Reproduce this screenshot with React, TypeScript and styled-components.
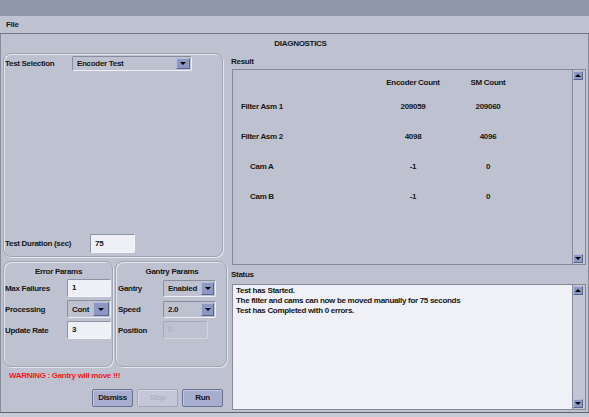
import React from 'react'
import styled, { createGlobalStyle } from 'styled-components'

const GlobalStyle = createGlobalStyle`
  html, body {
    margin: 0;
    padding: 0;
    background: #c7cbd8;
  }
  body {
    font-family: 'Liberation Sans', Arial, sans-serif;
    font-size: 8px;
    font-weight: bold;
    letter-spacing: -0.3px;
    color: #161616;
  }
  * {
    box-sizing: border-box;
  }
`

const Frame = styled.div`
  width: 589px;
  height: 413px;
  display: flex;
  flex-direction: column;
  background: #bec2d0;
  border-bottom: 1px solid #5e6270;
`

const TitleBar = styled.div`
  height: 16px;
  background: #8f96a8;
`

const MenuBar = styled.div`
  height: 18px;
  line-height: 17px;
  padding-left: 6px;
  background: #bfc3d1;
  border-bottom: 1px solid #6f7483;
`

const Content = styled.div`
  flex: 1;
  display: flex;
  flex-direction: column;
  border-left: 1px solid #878c9b;
  border-right: 1px solid #878c9b;
`

const Header = styled.div`
  height: 19px;
  line-height: 19px;
  text-align: center;
  padding-left: 12px;
`

const Panes = styled.div`
  flex: 1;
  display: flex;
`

const LeftPane = styled.div`
  width: 228px;
  padding-left: 2px;
  display: flex;
  flex-direction: column;
`

const Group = styled.div<{ $width: number; $height: number }>`
  width: ${(p) => p.$width}px;
  height: ${(p) => p.$height}px;
  border: 1px solid #a0a5b5;
  border-radius: 8px;
  box-shadow: 1px 1px 0 #e3e6ee, inset 1px 1px 0 #e3e6ee;
  display: flex;
  flex-direction: column;
`

const TestGroup = styled(Group)`
  padding: 2px 0 3px 1px;
`

const Spacer = styled.div`
  flex: 1;
`

const FieldRow = styled.div<{ $height?: number }>`
  display: flex;
  align-items: center;
  height: ${(p) => p.$height ?? 18}px;
`

const Label = styled.div<{ $width: number; $muted?: boolean }>`
  width: ${(p) => p.$width}px;
  flex-shrink: 0;
  color: ${(p) => (p.$muted ? '#161616' : 'inherit')};
`

const Combo = styled.div<{ $width: number; $height: number }>`
  width: ${(p) => p.$width}px;
  height: ${(p) => p.$height}px;
  display: flex;
  align-items: center;
  padding: 1px;
  border: 1px solid;
  border-color: #888d9e #eef0f5 #eef0f5 #888d9e;
  border-radius: 2px;
`

const ComboText = styled.div`
  flex: 1;
  padding-left: 3px;
`

const ArrowButton = styled.div<{ $width: number }>`
  width: ${(p) => p.$width}px;
  align-self: stretch;
  background: #8d97c3;
  border: 1px solid;
  border-color: #b7bedd #5d6587 #5d6587 #b7bedd;
  display: flex;
  align-items: center;
  justify-content: center;
  &::after {
    content: '';
    border-left: 3px solid transparent;
    border-right: 3px solid transparent;
    border-top: 3px solid #000;
  }
`

const Input = styled.div<{ $width: number; $height?: number; $disabled?: boolean }>`
  width: ${(p) => p.$width}px;
  height: ${(p) => p.$height ?? 18}px;
  line-height: ${(p) => (p.$height ?? 18) - 2}px;
  padding-left: 4px;
  border: 1px solid;
  border-radius: 2px;
  border-color: ${(p) =>
    p.$disabled ? '#a6abbb #d3d6e0 #d3d6e0 #a6abbb' : '#8d92a3 #f4f5f9 #f4f5f9 #8d92a3'};
  background: ${(p) => (p.$disabled ? '#bec2d0' : '#eef0f6')};
  color: ${(p) => (p.$disabled ? '#a5a9b7' : 'inherit')};
  font-weight: ${(p) => (p.$disabled ? 'normal' : 'bold')};
`

const ParamsRow = styled.div`
  margin-top: 4px;
  display: flex;
  gap: 2px;
`

const ParamGroup = styled(Group)<{ $pad: number }>`
  padding: 5px 0 0 ${(p) => p.$pad}px;
  gap: 3px;
`

const GroupTitle = styled.div`
  text-align: center;
  line-height: 10px;
  margin-bottom: -1px;
`

const Warning = styled.div`
  margin-top: 4px;
  padding-left: 6px;
  line-height: 10px;
  color: #f01818;
`

const ButtonRow = styled.div`
  margin-top: 8px;
  padding-right: 6px;
  display: flex;
  justify-content: flex-end;
  gap: 4px;
`

const Button = styled.div<{ $disabled?: boolean }>`
  width: 41px;
  height: 18px;
  line-height: 16px;
  text-align: center;
  border: 1px solid ${(p) => (p.$disabled ? '#a2a7b8' : '#6a7190')};
  border-radius: 2px;
  background: ${(p) => (p.$disabled ? '#c3c7d6' : '#a7adcf')};
  color: ${(p) => (p.$disabled ? '#a6aab8' : 'inherit')};
  font-weight: ${(p) => (p.$disabled ? 'normal' : 'bold')};
  box-shadow: inset 1px 1px 0 ${(p) => (p.$disabled ? '#d6d9e3' : '#c3c8e2')};
`

const RightPane = styled.div`
  flex: 1;
  display: flex;
  flex-direction: column;
`

const SectionLabel = styled.div<{ $top: number }>`
  margin-top: ${(p) => p.$top}px;
  padding-left: 2px;
  line-height: 10px;
`

const ScrollBox = styled.div<{ $height: number; $top: number; $light?: boolean }>`
  margin: ${(p) => p.$top}px 2px 0 3px;
  height: ${(p) => p.$height}px;
  display: flex;
  border: 1px solid #858998;
  background: ${(p) => (p.$light ? '#eff1f7' : '#bec2d0')};
`

const TableArea = styled.div`
  flex: 1;
  padding: 8px 0 0 8px;
  display: grid;
  grid-template-columns: 132px 70px 70px;
  grid-template-rows: 24px 30px 30px 30px 10px;
  column-gap: 5px;
  align-content: start;
`

const Cell = styled.div<{ $center?: boolean; $indent?: number }>`
  line-height: 10px;
  text-align: ${(p) => (p.$center ? 'center' : 'left')};
  padding-left: ${(p) => p.$indent ?? 0}px;
`

const StatusText = styled.div`
  flex: 1;
  padding: 1px 0 0 3px;
  line-height: 10px;
`

const Scrollbar = styled.div`
  width: 13px;
  border-left: 1px solid #858998;
  background: #c2c6d4;
  display: flex;
  flex-direction: column;
  justify-content: space-between;
  padding: 1px 2px 1px 0;
`

const ScrollArrow = styled.div<{ $up?: boolean }>`
  height: 9px;
  background: #8d97c3;
  border: 1px solid;
  border-color: #b7bedd #5d6587 #5d6587 #b7bedd;
  display: flex;
  align-items: center;
  justify-content: center;
  &::after {
    content: '';
    border-left: 3px solid transparent;
    border-right: 3px solid transparent;
    ${(p) => (p.$up ? 'border-bottom: 3px solid #000;' : 'border-top: 3px solid #000;')}
  }
`

const rows = [
  { name: 'Filter Asm 1', enc: '209059', sm: '209060', indent: 0 },
  { name: 'Filter Asm 2', enc: '4098', sm: '4096', indent: 0 },
  { name: 'Cam A', enc: '-1', sm: '0', indent: 9 },
  { name: 'Cam B', enc: '-1', sm: '0', indent: 9 },
]

const statusLines = [
  'Test has Started.',
  'The filter and cams can now be moved manually for 75 seconds',
  'Test has Completed with 0 errors.',
]

const App = () => {
  return (
    <>
      <GlobalStyle />
      <Frame>
        <TitleBar />
        <MenuBar>File</MenuBar>
        <Content>
          <Header>DIAGNOSTICS</Header>
          <Panes>
            <LeftPane>
              <TestGroup $width={220} $height={204}>
                <FieldRow $height={15}>
                  <Label $width={67}>Test Selection</Label>
                  <Combo $width={120} $height={15}>
                    <ComboText>Encoder Test</ComboText>
                    <ArrowButton $width={14} />
                  </Combo>
                </FieldRow>
                <Spacer />
                <FieldRow $height={19}>
                  <Label $width={85}>Test Duration (sec)</Label>
                  <Input $width={45} $height={19}>75</Input>
                </FieldRow>
              </TestGroup>
              <ParamsRow>
                <ParamGroup $width={110} $height={106} $pad={1}>
                  <GroupTitle>Error Params</GroupTitle>
                  <FieldRow>
                    <Label $width={62}>Max Failures</Label>
                    <Input $width={44}>1</Input>
                  </FieldRow>
                  <FieldRow>
                    <Label $width={62}>Processing</Label>
                    <Combo $width={44} $height={18}>
                      <ComboText>Cont</ComboText>
                      <ArrowButton $width={16} />
                    </Combo>
                  </FieldRow>
                  <FieldRow>
                    <Label $width={62}>Update Rate</Label>
                    <Input $width={44}>3</Input>
                  </FieldRow>
                </ParamGroup>
                <ParamGroup $width={112} $height={106} $pad={2}>
                  <GroupTitle>Gantry Params</GroupTitle>
                  <FieldRow>
                    <Label $width={45}>Gantry</Label>
                    <Combo $width={53} $height={17}>
                      <ComboText>Enabled</ComboText>
                      <ArrowButton $width={13} />
                    </Combo>
                  </FieldRow>
                  <FieldRow>
                    <Label $width={45}>Speed</Label>
                    <Combo $width={53} $height={17}>
                      <ComboText>2.0</ComboText>
                      <ArrowButton $width={13} />
                    </Combo>
                  </FieldRow>
                  <FieldRow>
                    <Label $width={45}>Position</Label>
                    <Input $width={45} $disabled>
                      0
                    </Input>
                  </FieldRow>
                </ParamGroup>
              </ParamsRow>
              <Warning>WARNING : Gantry will move !!!</Warning>
              <ButtonRow>
                <Button>Dismiss</Button>
                <Button $disabled>Stop</Button>
                <Button>Run</Button>
              </ButtonRow>
            </LeftPane>
            <RightPane>
              <SectionLabel $top={4}>Result</SectionLabel>
              <ScrollBox $top={2} $height={196}>
                <TableArea>
                  <Cell />
                  <Cell $center>Encoder Count</Cell>
                  <Cell $center>SM Count</Cell>
                  {rows.map((r) => (
                    <React.Fragment key={r.name}>
                      <Cell $indent={r.indent}>{r.name}</Cell>
                      <Cell $center>{r.enc}</Cell>
                      <Cell $center>{r.sm}</Cell>
                    </React.Fragment>
                  ))}
                </TableArea>
                <Scrollbar>
                  <ScrollArrow $up />
                  <ScrollArrow />
                </Scrollbar>
              </ScrollBox>
              <SectionLabel $top={5}>Status</SectionLabel>
              <ScrollBox $top={4} $height={126} $light>
                <StatusText>
                  {statusLines.map((line) => (
                    <div key={line}>{line}</div>
                  ))}
                </StatusText>
                <Scrollbar>
                  <ScrollArrow $up />
                  <ScrollArrow />
                </Scrollbar>
              </ScrollBox>
            </RightPane>
          </Panes>
        </Content>
      </Frame>
    </>
  )
}

export default App
